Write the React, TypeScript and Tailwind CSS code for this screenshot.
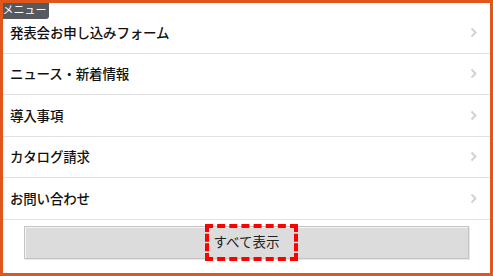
const items = ["発表会お申し込みフォーム", "ニュース・新着情報", "導入事項", "カタログ請求", "お問い合わせ"];

function Chevron() {
    return (
        <svg width="7" height="11" viewBox="0 0 7 11" className="shrink-0">
            <polyline points="1.5,1.5 5.5,5.5 1.5,9.5" fill="none" stroke="#d2d2d2" strokeWidth="2" />
        </svg>
    );
}

export default function App() {
    return (
        <div
            className="relative w-[493px] h-[276px] bg-white border-[3px] border-[#e1561b] overflow-hidden"
            style={{ fontFamily: '"Noto Sans CJK JP", "Noto Sans", sans-serif' }}
        >
            {/* メニュー label */}
            <div className="absolute left-[-3px] top-[-3px] w-[49px] h-[19px] bg-[#565a5e] rounded-br-[3px] flex items-center justify-center text-[11px] text-white leading-none z-10">
                メニュー
            </div>

            <div className="pt-[9px]">
                {items.map((item) => (
                    <div
                        key={item}
                        className="h-[41.5px] flex items-center justify-between pl-[7px] pr-[13px] border-b border-[#e2e2e2]"
                    >
                        <span className="text-[13.5px] font-medium text-[#111] leading-none tracking-[-0.2px]">{item}</span>
                        <Chevron />
                    </div>
                ))}

                {/* ボタン */}
                <div className="px-[21px] pt-[6px]">
                    <button className="w-full h-[33px] flex items-center justify-center bg-[#dcdcdc] border border-[#c4c4c4] shadow-[inset_1px_1px_0_#f4f4f4,1px_1px_0_#e8e8e8] text-[13.5px] text-[#222] leading-none">
                        すべて表示
                    </button>
                </div>
            </div>

            {/* 赤い点線の注目枠 */}
            <div className="absolute left-[202px] top-[221px] w-[93px] h-[37px] border-4 border-dashed border-[#ff0000]" />
        </div>
    );
}
